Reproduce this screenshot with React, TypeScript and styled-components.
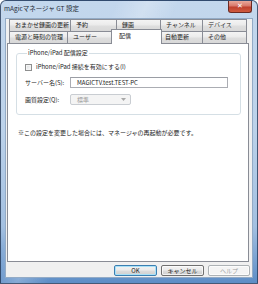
import React from 'react';
import styled, { createGlobalStyle } from 'styled-components';

const FONT = `"Noto Sans CJK JP", "Liberation Sans", sans-serif`;

const Global = createGlobalStyle`
  html, body { margin: 0; padding: 0; background: #ffffff; }
  body { width: 258px; height: 284px; overflow: hidden; }
  *, *::before, *::after { box-sizing: border-box; }
`;

const Window = styled.div`
  width: 258px;
  height: 284px;
  display: flex;
  flex-direction: column;
  padding: 0 4px 5px 4px;
  border: 1px solid rgba(38, 58, 88, 0.8);
  border-radius: 6px 6px 0 0;
  background:
    linear-gradient(115deg, rgba(255,255,255,0) 30%, rgba(255,255,255,0.25) 38%, rgba(255,255,255,0) 46%),
    linear-gradient(180deg, #c3d7ed 0%, #bcd2ea 45%, #a3c0e1 80%, #5d8dc6 100%);
  font-family: ${FONT};
  font-size: 6px;
  color: #1c1c1c;
  overflow: hidden;
`;

const TitleBar = styled.div`
  height: 17px;
  margin: 0 -4px;
  padding-left: 3px;
  display: flex;
  align-items: flex-start;
`;

const Title = styled.div`
  font-size: 6.5px;
  line-height: 15px;
  color: #1e2a36;
`;

const CloseButton = styled.div`
  margin-left: auto;
  margin-right: 5px;
  width: 24px;
  height: 12px;
  border: 1px solid #6b2a22;
  border-top: none;
  border-radius: 0 0 3px 3px;
  background: linear-gradient(180deg, #e9a99b 0%, #d8786a 45%, #c0402e 55%, #cf5b3e 100%);
  color: #ffffff;
  display: flex;
  align-items: center;
  justify-content: center;
  font-family: "DejaVu Sans", sans-serif;
  font-weight: bold;
  font-size: 7px;
  line-height: 1;
`;

const Client = styled.div`
  flex: 1;
  display: flex;
  flex-direction: column;
  background: #f0f0f0;
  border: 1px solid #93abc6;
`;

const Tabs = styled.div`
  margin-left: 3px;
  width: 238px;
  display: flex;
  flex-direction: column;
`;

const TabRow = styled.div`
  display: flex;
  height: 12px;
`;

const Tab = styled.div<{ $w: number; $active?: boolean }>`
  width: ${(p) => p.$w}px;
  flex: none;
  height: ${(p) => (p.$active ? 15 : 12)}px;
  margin: ${(p) => (p.$active ? '-2px -2px 0 -2px' : '0')};
  padding-left: ${(p) => (p.$active ? 7 : 5)}px;
  padding-top: ${(p) => (p.$active ? 1 : 0)}px;
  border: 1px solid #898c95;
  border-bottom: none;
  border-left-width: ${(p) => (p.$active ? 1 : 0)}px;
  background: ${(p) =>
    p.$active
      ? '#ffffff'
      : 'linear-gradient(180deg, #f4f4f4 0%, #ebebeb 45%, #dedede 55%, #d8d8d8 100%)'};
  position: relative;
  z-index: ${(p) => (p.$active ? 2 : 1)};
  line-height: 10px;
  white-space: nowrap;
  color: #1c1c1c;
  &:first-child {
    border-left-width: 1px;
  }
`;

const Panel = styled.div`
  margin: 0 3px 0 1px;
  height: 219px;
  background: #ffffff;
  border: 1px solid #898c95;
  padding: 5px 7px 0 8px;
  display: flex;
  flex-direction: column;
`;

const Group = styled.fieldset`
  margin: 0;
  padding: 6px 8px 9px 8px;
  min-inline-size: 0;
  border: 1px solid #d5dfe5;
  border-radius: 3px;
  display: flex;
  flex-direction: column;
  gap: 6px;
`;

const Legend = styled.legend`
  margin-left: 2px;
  padding: 0 1px;
  line-height: 8px;
  color: #1c1c1c;
`;

const CheckRow = styled.label`
  display: flex;
  align-items: center;
  gap: 4px;
  height: 8px;
  line-height: 8px;
`;

const CheckBox = styled.span`
  width: 7px;
  height: 7px;
  border: 1px solid #8e8f8f;
  background: linear-gradient(135deg, #d8dadc 0%, #eeeff0 60%, #fbfbfb 100%);
  box-shadow: inset 0 0 0 1px #f4f4f4;
`;

const FieldRow = styled.div`
  display: flex;
  align-items: center;
  height: 11px;
`;

const FieldLabel = styled.div`
  width: 45px;
  flex: none;
  line-height: 8px;
`;

const TextBox = styled.div`
  width: 158px;
  height: 11px;
  border: 1px solid #abadb3;
  border-top-color: #9a9da4;
  padding-left: 6px;
  line-height: 9px;
  background: #ffffff;
  color: #1c1c1c;
`;

const Combo = styled.div`
  width: 61px;
  height: 11px;
  border: 1px solid #c9cdd2;
  border-radius: 2px;
  background: #f4f4f4;
  color: #9a9a9a;
  display: flex;
  align-items: center;
  padding: 0 4px 0 6px;
  line-height: 9px;
`;

const ComboText = styled.span`
  flex: 1;
`;

const Note = styled.div`
  margin: 14px 0 0 2px;
  line-height: 8px;
  color: #1c1c1c;
`;

const ButtonBar = styled.div`
  display: flex;
  justify-content: flex-end;
  gap: 4px;
  margin-top: 3px;
  padding-right: 2px;
`;

const Button = styled.div<{ $w: number; $default?: boolean; $disabled?: boolean }>`
  width: ${(p) => p.$w}px;
  height: 11px;
  border: 1px solid ${(p) => (p.$default ? '#3c7fb1' : p.$disabled ? '#adb2b5' : '#707070')};
  border-radius: 2px;
  background: ${(p) =>
    p.$disabled
      ? '#f4f4f4'
      : 'linear-gradient(180deg, #f2f2f2 0%, #ebebeb 48%, #dddddd 52%, #cfcfcf 100%)'};
  box-shadow: ${(p) => (p.$default ? 'inset 0 0 0 1px #a8e1f8' : 'inset 0 0 0 1px rgba(255,255,255,0.7)')};
  color: ${(p) => (p.$disabled ? '#a0a0a0' : '#1c1c1c')};
  display: flex;
  align-items: center;
  justify-content: center;
  line-height: 9px;
  & + & {
    margin-left: 0;
  }
`;

const row1 = [
  { label: 'おまかせ録画の更新', w: 62 },
  { label: '予約', w: 46 },
  { label: '録画', w: 44 },
  { label: 'チャンネル', w: 42 },
  { label: 'デバイス', w: 44 },
];

const row2 = [
  { label: '電源と時刻の管理', w: 59 },
  { label: 'ユーザー', w: 45 },
  { label: '配信', w: 47, active: true },
  { label: '自動更新', w: 43 },
  { label: 'その他', w: 44 },
];

export default function App() {
  return (
    <>
      <Global />
      <Window>
        <TitleBar>
          <Title>mAgicマネージャ GT 設定</Title>
          <CloseButton>✕</CloseButton>
        </TitleBar>
        <Client>
          <Tabs>
            <TabRow>
              {row1.map((t) => (
                <Tab key={t.label} $w={t.w}>
                  {t.label}
                </Tab>
              ))}
            </TabRow>
            <TabRow>
              {row2.map((t) => (
                <Tab key={t.label} $w={t.active ? t.w + 4 : t.w} $active={t.active}>
                  {t.label}
                </Tab>
              ))}
            </TabRow>
          </Tabs>
          <Panel>
            <Group>
              <Legend>iPhone/iPad 配信設定</Legend>
              <CheckRow>
                <CheckBox />
                <span>iPhone/iPad 接続を有効にする(I)</span>
              </CheckRow>
              <FieldRow>
                <FieldLabel>サーバー名(S):</FieldLabel>
                <TextBox>MAGICTV.test.TEST-PC</TextBox>
              </FieldRow>
              <FieldRow>
                <FieldLabel>画質設定(Q):</FieldLabel>
                <Combo>
                  <ComboText>標準</ComboText>
                  <svg width="5" height="3" viewBox="0 0 5 3">
                    <polygon points="0,0 5,0 2.5,3" fill="#a8a8a8" />
                  </svg>
                </Combo>
              </FieldRow>
            </Group>
            <Note>※この設定を変更した場合には、マネージャの再起動が必要です。</Note>
          </Panel>
          <ButtonBar>
            <Button $w={43} $default>OK</Button>
            <Button $w={43}>キャンセル</Button>
            <Button $w={42} $disabled>ヘルプ</Button>
          </ButtonBar>
        </Client>
      </Window>
    </>
  );
}
